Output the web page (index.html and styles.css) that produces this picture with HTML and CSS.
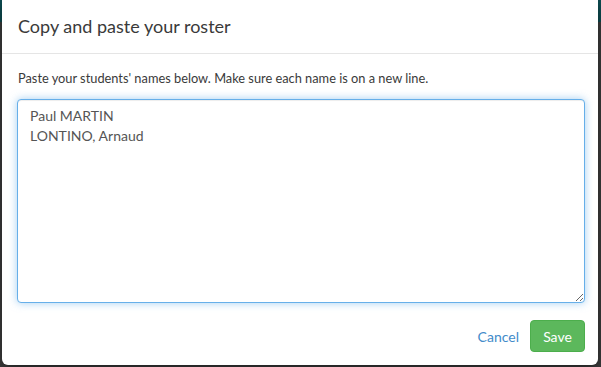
FILE: index.html
```html
<!DOCTYPE html>
<html lang="en">
<head>
<meta charset="utf-8">
<title>Copy and paste your roster</title>
<link rel="stylesheet" href="styles.css">
</head>
<body>
<div class="backdrop">
  <div class="modal">
    <div class="modal-header">
      <h4 class="modal-title">Copy and paste your roster</h4>
    </div>
    <div class="modal-body">
      <p class="hint">Paste your students' names below. Make sure each name is on a new line.</p>
      <textarea class="roster" autofocus>Paul MARTIN
LONTINO, Arnaud</textarea>
    </div>
    <div class="modal-footer">
      <a class="btn-link" href="#">Cancel</a>
      <button class="btn-save" type="button">Save</button>
    </div>
  </div>
</div>
</body>
</html>
```

FILE: styles.css
```css
* { box-sizing: border-box; }
html, body { margin: 0; padding: 0; }
body {
  width: 601px;
  height: 367px;
  overflow: hidden;
  font-family: Lato, "Open Sans", "Liberation Sans", sans-serif;
  color: #333;
  background: linear-gradient(to bottom, #0d4d52 0, #0d4d52 22px, #3e3e3e 22px, #3e3e3e 100%);
}
.backdrop {
  height: 367px;
  padding: 0 3px 2px 2px;
}
.modal {
  background: #fff;
  height: 365px;
  border-radius: 0 0 6px 6px;
  box-shadow: 0 5px 15px rgba(0, 0, 0, .5);
  display: flex;
  flex-direction: column;
}
.modal-header {
  padding: 14px 16px 14px;
  border-bottom: 1px solid #e5e5e5;
}
.modal-title {
  margin: 0;
  font-size: 18px;
  font-weight: 400;
  line-height: 25px;
  color: #3a3a3a;
}
.modal-body {
  padding: 15px 13px 0 15px;
}
.hint {
  margin: 0 0 12px 1px;
  font-size: 12.8px;
  line-height: 18px;
  color: #3a3a3a;
}
.roster {
  display: block;
  width: 568px;
  height: 204px;
  margin: 0;
  padding: 6px 12px;
  font-family: inherit;
  font-size: 14px;
  line-height: 20px;
  color: #555;
  border: 1px solid #66afe9;
  border-radius: 4px;
  outline: 0;
  resize: vertical;
  box-shadow: inset 0 1px 1px rgba(0, 0, 0, .075), 0 0 8px rgba(102, 175, 233, .6);
}
.modal-footer {
  display: flex;
  justify-content: flex-end;
  align-items: center;
  gap: 11px;
  padding: 17px 13px 0 15px;
}
.btn-link {
  color: #428bca;
  text-decoration: none;
  font-size: 14px;
}
.btn-save {
  width: 55px;
  height: 32px;
  font-family: inherit;
  font-size: 14px;
  color: #fff;
  background: #5cb85c;
  border: 1px solid #4cae4c;
  border-radius: 4px;
  padding: 0;
}
```
